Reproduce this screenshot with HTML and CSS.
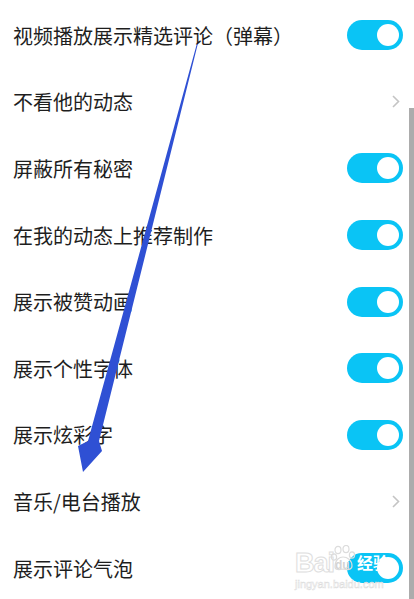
FILE: index.html
```html
<!DOCTYPE html>
<html lang="zh-CN">
<head>
    <meta charset="UTF-8">
    <meta name="viewport" content="width=device-width, initial-scale=1.0">
    <title>隐私设置</title>
    <link rel="stylesheet" href="styles.css">
</head>
<body>
    <div class="list">
        <div class="row">
            <span class="label">视频播放展示精选评论（弹幕）</span>
            <span class="switch"></span>
        </div>
        <div class="row">
            <span class="label">不看他的动态</span>
            <svg class="chevron" width="8" height="13" viewBox="0 0 8 13"><path d="M1 1 L6.5 6.5 L1 12" fill="none" stroke="#c4c4c4" stroke-width="1.6"/></svg>
        </div>
        <div class="row">
            <span class="label">屏蔽所有秘密</span>
            <span class="switch"></span>
        </div>
        <div class="row">
            <span class="label">在我的动态上推荐制作</span>
            <span class="switch"></span>
        </div>
        <div class="row">
            <span class="label">展示被赞动画</span>
            <span class="switch"></span>
        </div>
        <div class="row">
            <span class="label">展示个性字体</span>
            <span class="switch"></span>
        </div>
        <div class="row">
            <span class="label">展示炫彩字</span>
            <span class="switch"></span>
        </div>
        <div class="row">
            <span class="label">音乐/电台播放</span>
            <svg class="chevron" width="8" height="13" viewBox="0 0 8 13"><path d="M1 1 L6.5 6.5 L1 12" fill="none" stroke="#c4c4c4" stroke-width="1.6"/></svg>
        </div>
        <div class="row">
            <span class="label">展示评论气泡</span>
            <span class="switch"></span>
        </div>
    </div>

    <!-- annotation drawn over the screenshot -->
    <svg class="arrow" width="414" height="599" viewBox="0 0 414 599">
        <polygon points="196.8,44 197.8,44 99,441 102,451 83,472 78,446 88,441" fill="#2f50d4"/>
    </svg>

    <div class="scrollbar"></div>

    <div class="watermark">
        <div class="wm-top">
            <span class="wm-bai">Bai</span>
            <span class="wm-paw">
                <svg width="26" height="26" viewBox="0 0 26 26">
                    <g fill="none" stroke="#dcdcdc" stroke-width="1.2">
                        <ellipse cx="7" cy="5" rx="3" ry="3.6"/>
                        <ellipse cx="15" cy="4" rx="3" ry="3.6"/>
                        <ellipse cx="3" cy="12" rx="2.6" ry="3.2"/>
                        <ellipse cx="21" cy="10" rx="2.6" ry="3.2"/>
                        <path d="M4 22 C4 14 9 12 12 12 C16 12 21 15 21 21 C21 25 16 25 12 24 C8 25 4 25 4 22 Z"/>
                    </g>
                </svg>
                <span class="wm-du">du</span>
            </span>
            <span class="wm-jy">经验</span>
        </div>
        <div class="wm-url">jingyan.baidu.com</div>
    </div>
</body>
</html>
```

FILE: styles.css
```css
* {
    margin: 0;
    padding: 0;
    box-sizing: border-box;
}
body {
    width: 414px;
    height: 599px;
    overflow: hidden;
    background: #fff;
    font-family: "Noto Sans CJK SC", "Noto Sans", sans-serif;
    color: #1e1e1e;
}
.list {
    padding-top: 2px;
}
.row {
    height: 66.6px;
    display: flex;
    align-items: center;
    justify-content: space-between;
    padding: 0 11px 0 13px;
}
.label {
    font-size: 20px;
    line-height: 24px;
    padding-top: 1px;
}
.switch {
    width: 56px;
    height: 30px;
    border-radius: 15px;
    background: #0ac4f5;
    display: flex;
    align-items: center;
    justify-content: flex-end;
    padding-right: 4px;
}
.switch::after {
    content: "";
    width: 22px;
    height: 22px;
    border-radius: 50%;
    background: #fff;
}
.chevron {
    margin-right: 3px;
}
.arrow {
    position: absolute;
    left: 0;
    top: 0;
}
.scrollbar {
    position: absolute;
    right: 0;
    top: 108px;
    bottom: 0;
    width: 5px;
    background: #acacac;
}
.watermark {
    position: absolute;
    left: 295px;
    top: 543px;
    width: 100px;
}
.wm-top {
    display: flex;
    align-items: flex-end;
    height: 34px;
}
.wm-bai {
    font-family: "Liberation Sans", sans-serif;
    font-size: 27px;
    font-weight: bold;
    line-height: 28px;
    color: rgba(255, 255, 255, 0.85);
    -webkit-text-stroke: 1px #dedede;
    letter-spacing: -1px;
}
.wm-paw {
    position: relative;
    width: 24px;
    height: 34px;
    margin-left: -3px;
}
.wm-paw svg {
    position: absolute;
    left: 0;
    top: 2px;
}
.wm-du {
    position: absolute;
    left: 4px;
    top: 15px;
    font-family: "Liberation Sans", sans-serif;
    font-size: 12px;
    font-weight: bold;
    color: #d4d4d4;
}
.wm-jy {
    font-size: 16px;
    font-weight: bold;
    line-height: 22px;
    color: #fff;
    margin-left: 2px;
    margin-bottom: 4px;
}
.wm-url {
    font-family: "Liberation Sans", sans-serif;
    font-size: 11px;
    line-height: 12px;
    color: rgba(255, 255, 255, 0.9);
    -webkit-text-stroke: 0.5px #dcdcdc;
    margin-top: 1px;
}
```
